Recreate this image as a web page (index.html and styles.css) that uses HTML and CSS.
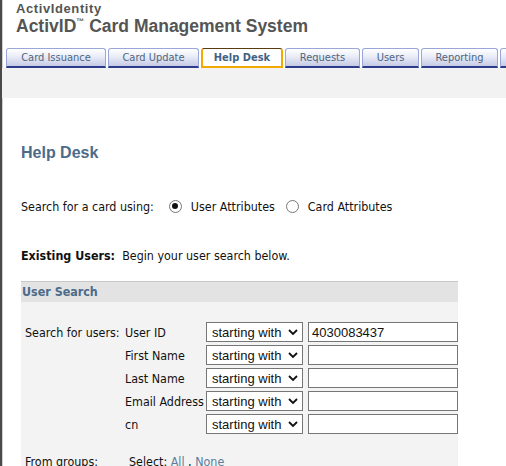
FILE: index.html
```html
<!DOCTYPE html>
<html lang="en">
<head>
	<meta charset="UTF-8">
	<title>Help Desk</title>
	<link rel="stylesheet" href="styles.css">
</head>
<body>
	<div class="page">
		<div class="brand">
			<div class="company">ActivIdentity</div>
			<div class="product">ActivID<sup>™</sup> Card Management System</div>
		</div>

		<ul class="tabs">
			<li class="tab">Card Issuance</li>
			<li class="tab">Card Update</li>
			<li class="tab active">Help Desk</li>
			<li class="tab">Requests</li>
			<li class="tab">Users</li>
			<li class="tab">Reporting</li>
			<li class="tab"></li>
		</ul>
		<div class="band"></div>

		<div class="content">
			<h1 class="title">Help Desk</h1>

			<div class="mode">
				<span>Search for a card using:</span>
				<label class="choice"><input type="radio" name="mode" checked> User Attributes</label>
				<label class="choice"><input type="radio" name="mode"> Card Attributes</label>
			</div>

			<p class="intro"><b>Existing Users:</b>&nbsp; Begin your user search below.</p>

			<div class="panel">
				<div class="panel-head">User Search</div>
				<div class="panel-body">
					<div class="grid">
						<span class="lead">Search for users:</span>
						<span>User ID</span>
						<div class="pick"><select><option>starting with</option></select><svg viewBox="0 0 10 7"><path d="M1 1 L5 5 L9 1" /></svg></div>
						<input class="field" type="text" value="4030083437">

						<span></span>
						<span>First Name</span>
						<div class="pick"><select><option>starting with</option></select><svg viewBox="0 0 10 7"><path d="M1 1 L5 5 L9 1" /></svg></div>
						<input class="field" type="text">

						<span></span>
						<span>Last Name</span>
						<div class="pick"><select><option>starting with</option></select><svg viewBox="0 0 10 7"><path d="M1 1 L5 5 L9 1" /></svg></div>
						<input class="field" type="text">

						<span></span>
						<span>Email Address</span>
						<div class="pick"><select><option>starting with</option></select><svg viewBox="0 0 10 7"><path d="M1 1 L5 5 L9 1" /></svg></div>
						<input class="field" type="text">

						<span></span>
						<span>cn</span>
						<div class="pick"><select><option>starting with</option></select><svg viewBox="0 0 10 7"><path d="M1 1 L5 5 L9 1" /></svg></div>
						<input class="field" type="text">
					</div>

					<div class="groups">
						<span class="lead">From groups:</span>
						<span>Select: <a href="#">All</a> , <a href="#">None</a></span>
					</div>
				</div>
			</div>
		</div>
	</div>
</body>
</html>
```

FILE: styles.css
```css
*{
	margin: 0;
	padding: 0;
	box-sizing: border-box;
}
ul,li{
	list-style: none;
}
html,body{
	height: 100%;
	overflow: hidden;
}
body{
	font-family: "DejaVu Sans Condensed", "DejaVu Sans", sans-serif;
	font-size: 12.4px;
	color: #111;
	background: #fff;
}
.page{
	min-height: 100%;
	border-left: 2px solid #4a4a4a;
	box-shadow: inset 1px 0 0 #cfcfcf;
}
.brand{
	padding: 1px 0 0 14px;
	color: #555;
	font-family: "Liberation Sans", Arial, sans-serif;
	font-weight: bold;
}
.company{
	font-size: 13px;
	line-height: 15px;
	letter-spacing: 0.6px;
}
.product{
	font-size: 17.5px;
	line-height: 21px;
}
.product sup{
	font-size: 8px;
	line-height: 0;
	vertical-align: baseline;
	position: relative;
	top: -8px;
}
.tabs{
	display: flex;
	gap: 2px;
	padding-left: 4px;
	margin-top: 11px;
	height: 20px;
	overflow: hidden;
	white-space: nowrap;
}
.tab{
	flex: none;
	height: 20px;
	text-align: center;
	line-height: 17px;
	font-size: 11px;
	color: #4d6680;
	border: 1px solid #9aa6d8;
	border-bottom: 2px solid #2c3b8c;
	border-radius: 3px 3px 0 0;
	background: linear-gradient(#ffffff, #eceef8 40%, #c6cbe6);
}
.tab:nth-child(1){ width: 100px; }
.tab:nth-child(2){ width: 91px; }
.tab:nth-child(3){ width: 82px; }
.tab:nth-child(4){ width: 75px; }
.tab:nth-child(5){ width: 57px; }
.tab:nth-child(6){ width: 77px; }
.tab:nth-child(7){ width: 60px; }
.tab.active{
	font-weight: bold;
	color: #3f6285;
	background: #fff;
	border: 2px solid #f2a900;
	border-top: 1px solid #5a3a10;
	line-height: 17px;
}
.band{
	height: 30px;
	background: #f2f2f2;
}
.content{
	padding-left: 19px;
}
.title{
	margin-top: 46px;
	font-family: "Liberation Sans", Arial, sans-serif;
	font-size: 16px;
	line-height: 18px;
	color: #4c6b8a;
}
.mode{
	display: flex;
	align-items: center;
	margin-top: 36px;
	height: 16px;
}
.choice{
	display: flex;
	align-items: center;
	gap: 9px;
	margin-left: 15px;
}
.choice + .choice{
	margin-left: 11px;
}
.choice input{
	appearance: none;
	width: 13px;
	height: 13px;
	border: 1px solid #777;
	border-radius: 50%;
	background: #fff;
	display: grid;
	place-items: center;
}
.choice input:checked::after{
	content: "";
	width: 6px;
	height: 6px;
	border-radius: 50%;
	background: #111;
}
.intro{
	margin-top: 34px;
	line-height: 16px;
}
.panel{
	width: 437px;
	margin-top: 17px;
	background: #f3f3f3;
}
.panel-head{
	height: 21px;
	padding: 2px 0 0 1px;
	border-top: 1px solid #c8c8c8;
	background: #e3e3e3;
	color: #4c6b8a;
	font-weight: bold;
}
.panel-body{
	padding: 20px 0 40px 4px;
}
.grid{
	display: grid;
	grid-template-columns: 100px 81px 97px 155px;
	row-gap: 3px;
	align-items: center;
}
.grid .field{
	width: 150px;
	margin-left: 5px;
}
.pick{
	position: relative;
	height: 20px;
}
.pick select{
	appearance: none;
	width: 97px;
	height: 20px;
	padding-left: 5px;
	border: 1px solid #767676;
	border-radius: 0;
	background: #fff;
	color: #111;
	font-family: "Liberation Sans", Arial, sans-serif;
	font-size: 13px;
}
.pick svg{
	position: absolute;
	right: 5px;
	top: 7px;
	width: 10px;
	height: 7px;
	fill: none;
	stroke: #111;
	stroke-width: 1.8;
}
.field{
	height: 20px;
	padding-left: 3px;
	border: 1px solid #767676;
	background: #fff;
	color: #111;
	font-family: "Liberation Sans", Arial, sans-serif;
	font-size: 13px;
}
.groups{
	display: flex;
	margin-top: 20px;
}
.groups .lead{
	width: 104px;
}
.groups a{
	color: #5a7d9e;
	text-decoration: none;
}
```
